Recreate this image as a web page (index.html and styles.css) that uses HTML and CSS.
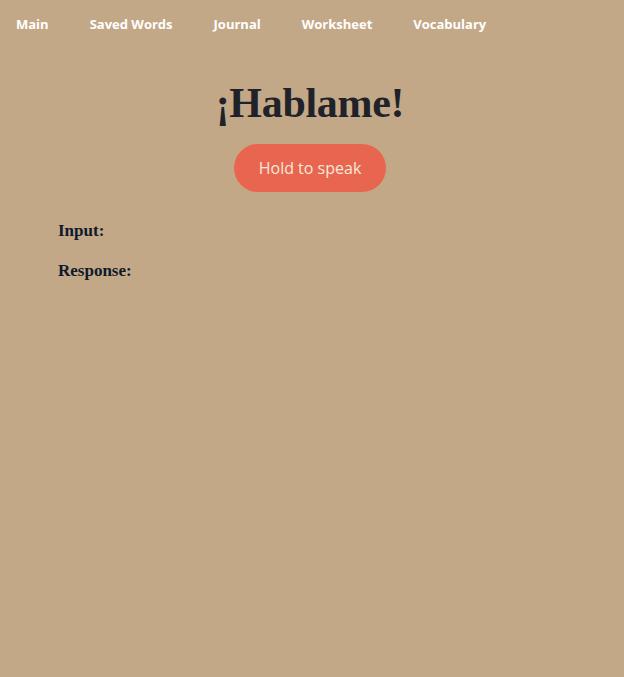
FILE: index.html
```html
<!DOCTYPE html>
<html lang="es">
<head>
<meta charset="utf-8">
<title>Hablame</title>
<link rel="stylesheet" href="styles.css">
</head>
<body>
<nav class="nav">
  <a class="nav-link" href="#">Main</a>
  <a class="nav-link" href="#">Saved Words</a>
  <a class="nav-link" href="#">Journal</a>
  <a class="nav-link" href="#">Worksheet</a>
  <a class="nav-link" href="#">Vocabulary</a>
</nav>
<main class="main">
  <h1 class="title">¡Hablame!</h1>
  <button class="speak-btn">Hold to speak</button>
  <section class="io">
    <p class="io-label">Input:</p>
    <p class="io-label">Response:</p>
  </section>
</main>
</body>
</html>
```
FILE: styles.css
```css
html, body {
  margin: 0;
  padding: 0;
  background: #c3a887;
  height: 100%;
}
body {
  font-family: "Open Sans", "Liberation Sans", sans-serif;
}
.nav {
  display: flex;
  gap: 41px;
  padding: 15px 16px 0;
  height: 33px;
}
.nav-link {
  color: #ffffff;
  font-weight: 700;
  font-size: 13px;
  text-decoration: none;
  line-height: 18px;
}
.main {
  display: flex;
  flex-direction: column;
  align-items: center;
  padding-right: 4px;
}
.title {
  margin: 30px 0 0;
  font-family: "Liberation Serif", serif;
  font-weight: 700;
  font-size: 42px;
  line-height: 50px;
  color: #1f2329;
  letter-spacing: -0.3px;
}
.speak-btn {
  margin-top: 16px;
  width: 152px;
  height: 48px;
  border: none;
  border-radius: 24px;
  background: #e8664f;
  color: #f7e8da;
  font-family: "Open Sans", "Liberation Sans", sans-serif;
  font-size: 16px;
}
.io {
  align-self: stretch;
  padding: 29px 58px 0;
}
.io-label {
  margin: 0 0 20px;
  font-family: "Liberation Serif", serif;
  font-weight: 700;
  font-size: 17px;
  line-height: 20px;
  color: #0f1a2b;
}
```
